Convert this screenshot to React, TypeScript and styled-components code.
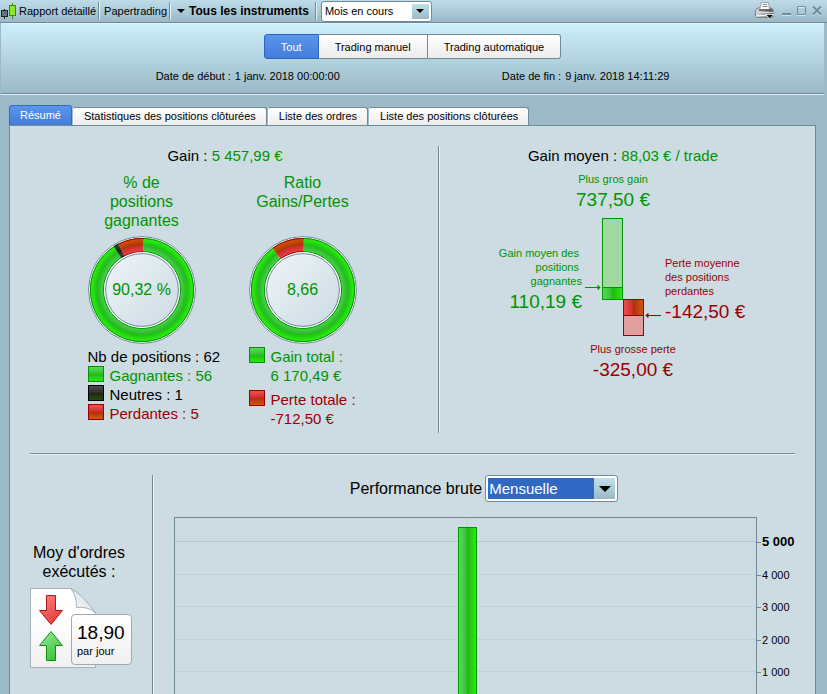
import React from "react";
import styled, { createGlobalStyle, css } from "styled-components";

const color = {
  frame: "#9bb9c7",
  panel: "#cddce3",
  line: "#6f8b98",
  light: "#e4f3fa",
  gain: "#009400",
  loss: "#990000",
};

type Tone = "gain" | "loss" | "neutral";

const toneText: Record<Tone, string> = {
  gain: color.gain,
  loss: color.loss,
  neutral: "#000",
};

const toneFill: Record<Tone, string> = {
  gain: "#52e052, #34bc34 50%, #1cbc10 50%, #2ce812",
  loss: "#f45050, #cc2a2a 50%, #b03008 50%, #d05a10",
  neutral: "#4a4a4a, #2c2c2c 50%, #1a2808 50%, #284a12",
};

const GlobalStyle = createGlobalStyle`
  *, *::before, *::after { box-sizing: border-box; }
  body {
    margin: 0;
    background: ${color.frame};
    color: #000;
    font: 11px/14px "Liberation Sans", Arial, sans-serif;
  }
  button, select { font: inherit; color: inherit; margin: 0; }
  h2, p, dl, dd, dt, ul { margin: 0; padding: 0; font: inherit; }
`;

const Shell = styled.div`
  min-height: 100vh;
  display: flex;
  flex-direction: column;
  background: ${color.frame};
`;

/* Title bar */

const TitleBar = styled.header`
  display: flex;
  align-items: center;
  height: 23px;
  padding: 0 5px 0 1px;
  background: linear-gradient(#bddce8, #9bb8c6);
  border-bottom: 1px solid ${color.line};
`;

const TitleItem = styled.span`
  display: flex;
  align-items: center;
  gap: 2px;
  white-space: nowrap;
`;

const Separator = styled.span`
  width: 2px;
  height: 18px;
  margin: 0 4px 0 2px;
  border-left: 1px solid ${color.line};
  border-right: 1px solid ${color.light};
`;

const MenuButton = styled.button`
  display: flex;
  align-items: center;
  gap: 4px;
  padding: 0 4px 0 2px;
  border: 0;
  background: none;
  font-size: 12px;
  font-weight: bold;
  white-space: nowrap;
`;

const WindowTools = styled.div`
  display: flex;
  align-items: center;
  gap: 5px;
  margin-left: auto;
`;

const ToolButton = styled.button<{ $wide?: boolean }>`
  display: flex;
  padding: 0;
  margin-right: ${(p) => (p.$wide ? "3px" : "0")};
  border: 0;
  background: none;
`;

/* Drop-down */

const SelectFrame = styled.span<{ $large?: boolean }>`
  display: grid;
  grid-template-columns: 1fr ${(p) => (p.$large ? "21px" : "17px")};
  width: ${(p) => (p.$large ? "133px" : "111px")};
  height: ${(p) => (p.$large ? "27px" : "21px")};
  padding: 2px;
  border: 1px solid ${color.line};
  border-radius: 3px;
  background: #fff;
`;

const SelectBox = styled.select<{ $large?: boolean }>`
  grid-area: 1 / 1 / 2 / 3;
  appearance: none;
  width: 100%;
  padding: 0 0 0 1px;
  border: 0;
  border-radius: 0;
  background: #fff;
  ${(p) =>
    p.$large &&
    css`
      font-size: 15px;
      color: #fff;
      background: #2f69c4;
    `}
`;

const SelectArrow = styled.span`
  grid-area: 1 / 2;
  z-index: 1;
  display: flex;
  align-items: center;
  justify-content: center;
  pointer-events: none;
  background: linear-gradient(#c0e0ec, #9bb9c7);
`;

/* Filter header */

const FilterHeader = styled.section`
  display: flex;
  flex-direction: column;
  align-items: center;
  gap: 10px;
  height: 71px;
  margin: 0 3px 0 1px;
  padding-top: 10px;
  background: linear-gradient(#cdeefb, #9bb9c7);
  border-top: 1px solid ${color.light};
  border-bottom: 1px solid ${color.line};
  box-shadow: 0 1px ${color.light};
`;

const Segments = styled.div`
  display: flex;
`;

const Segment = styled.button<{ $active?: boolean }>`
  height: 25px;
  padding: 0 16px;
  border: 1px solid ${color.line};
  border-left-width: 0;
  background: linear-gradient(#fff, #ececec);
  white-space: nowrap;
  &:first-child {
    border-left-width: 1px;
    border-radius: 3px 0 0 3px;
  }
  &:last-child {
    border-radius: 0 3px 3px 0;
  }
  ${(p) =>
    p.$active &&
    css`
      color: #fff;
      border-color: #2f62c4;
      background: linear-gradient(#5a96ec, #447cda);
    `}
`;

const Dates = styled.div`
  display: flex;
  justify-content: center;
  gap: 162px;
`;

const DateField = styled.p`
  display: flex;
  gap: 4px;
  white-space: nowrap;
`;

/* Tabs */

const TabList = styled.div`
  display: flex;
  align-items: flex-end;
  gap: 1px;
  margin: 11px 0 0 9px;
`;

const Tab = styled.button<{ $active?: boolean }>`
  height: 18px;
  padding: 0 10px;
  border: 1px solid ${color.line};
  border-bottom: 0;
  border-left-color: #fff;
  border-radius: 3px 3px 0 0;
  background: linear-gradient(#fff, #ececec);
  white-space: nowrap;
  line-height: 15px;
  ${(p) =>
    p.$active &&
    css`
      height: 20px;
      color: #fff;
      border-color: #3468c8;
      background: linear-gradient(#5a96ec, #447cda);
    `}
`;

const Panel = styled.main`
  flex: 1;
  display: flex;
  flex-direction: column;
  margin: 0 11px 0 9px;
  padding: 20px 20px 0;
  border: solid ${color.line};
  border-width: 1px 1px 0;
  background: ${color.panel};
`;

/* Summary */

const Summary = styled.section`
  display: grid;
  grid-template-columns: 8fr 7fr;
  padding-bottom: 20px;
  border-bottom: 1px solid ${color.line};
  box-shadow: 0 1px ${color.light};
`;

const GainColumn = styled.div`
  padding: 0 18px 5px 0;
  text-align: center;
`;

const AverageColumn = styled.div`
  padding-left: 12px;
  border-left: 1px solid ${color.line};
  box-shadow: inset 1px 0 ${color.light};
  text-align: center;
`;

const Headline = styled.h2`
  font-size: 15px;
  line-height: 20px;
`;

const Toned = styled.span<{ $tone: Tone }>`
  color: ${(p) => toneText[p.$tone]};
`;

const Gauges = styled.div`
  display: grid;
  grid-template-columns: 108px 108px;
  justify-content: center;
  gap: 53px;
  margin-top: 7px;
  padding-right: 6px;
`;

const Gauge = styled.div`
  display: flex;
  flex-direction: column;
`;

const GaugeTitle = styled.h2`
  min-height: 57px;
  margin-bottom: 6px;
  color: ${color.gain};
  font-size: 16px;
  line-height: 19px;
`;

const Dial = styled.div`
  display: grid;
  place-items: center;
  margin-bottom: 3px;
  & > * {
    grid-area: 1 / 1;
  }
`;

const DialValue = styled.span`
  color: ${color.gain};
  font-size: 16px;
`;

const Legend = styled.ul`
  list-style: none;
  text-align: left;
  font-size: 15px;
  line-height: 19px;
  white-space: nowrap;
`;

const LegendItem = styled.li<{ $tone: Tone; $spaced?: boolean }>`
  display: flex;
  gap: 6px;
  margin-top: ${(p) => (p.$spaced ? "5px" : "0")};
  color: ${(p) => toneText[p.$tone]};
`;

const Swatch = styled.span<{ $tone: Tone }>`
  flex: none;
  width: 16px;
  height: 16px;
  border: 1px solid ${(p) => toneText[p.$tone]};
  background: linear-gradient(${(p) => toneFill[p.$tone]});
`;

const Extreme = styled.dl<{ $tone: Tone }>`
  margin: 6px 0;
  padding: ${(p) => (p.$tone === "gain" ? "0 20px 0 0" : "0 0 0 20px")};
  color: ${(p) => toneText[p.$tone]};
`;

const Amount = styled.dd`
  font-size: 19px;
  line-height: 24px;
  margin-top: 2px;
`;

const Comparison = styled.div`
  display: grid;
  grid-template-columns: 1fr 76px 1fr;
`;

const Average = styled.dl<{ $tone: Tone }>`
  padding: ${(p) => (p.$tone === "gain" ? "28px 3px 0 0" : "38px 0 0 4px")};
  text-align: ${(p) => (p.$tone === "gain" ? "right" : "left")};
  color: ${(p) => toneText[p.$tone]};
  white-space: nowrap;
`;

/* Performance */

const Lower = styled.section`
  flex: 1;
  display: grid;
  grid-template-columns: 122px 1fr;
  padding-top: 21px;
`;

const Orders = styled.div`
  padding: 68px 20px 0 0;
`;

const OrdersTitle = styled.h2`
  margin-bottom: 7px;
  padding-right: 4px;
  text-align: center;
  font-size: 16px;
  line-height: 19px;
`;

const OrdersCard = styled.div`
  display: grid;
  justify-items: start;
  align-items: start;
  & > * {
    grid-area: 1 / 1;
  }
`;

const RateCard = styled.p`
  width: 61px;
  height: 51px;
  margin: 26px 0 0 41px;
  padding: 7px 0 0 5px;
  border: 1px solid #9dabb5;
  border-radius: 4px;
  background: linear-gradient(#fff, #f0f0f0);
  z-index: 1;
`;

const RateValue = styled.strong`
  display: block;
  font-size: 19px;
  font-weight: normal;
  line-height: 22px;
`;

const Performance = styled.div`
  display: flex;
  flex-direction: column;
  padding-left: 20px;
  border-left: 1px solid ${color.line};
  box-shadow: inset 1px 0 ${color.light};
`;

const PerformanceTitle = styled.label`
  display: flex;
  align-items: center;
  justify-content: center;
  gap: 3px;
  margin-bottom: 15px;
  font-size: 16px;
`;

const Chart = styled.div`
  flex: 1;
  display: grid;
  grid-template-columns: 1fr 38px;
  grid-template-rows: 25px 33px 32px 33px 32px minmax(22px, 1fr);
  margin-left: 1px;
`;

const Plot = styled.div`
  grid-area: 1 / 1 / -1 / 2;
  border: solid ${color.line};
  border-width: 1px 1px 0;
`;

const GridLine = styled.div<{ $row: number; $major: boolean }>`
  grid-area: ${(p) => p.$row} / 1;
  margin: 0 1px;
  border-bottom: 1px solid ${(p) => (p.$major ? "#bac4c9" : "#c1d0d7")};
`;

const MonthLine = styled.div`
  grid-area: 1 / 1 / 2 / 2;
  justify-self: center;
  width: 1px;
  margin: 1px 0 0 4px;
  background: #c1d0d7;
`;

const MonthBar = styled.div`
  grid-area: 1 / 1 / -1 / 2;
  justify-self: center;
  width: 19px;
  margin: 10px 0 0 4px;
  border: solid ${color.gain};
  border-width: 1px 1px 0;
  background: linear-gradient(90deg, ${toneFill.gain});
`;

const AxisLabel = styled.span<{ $row: number; $major: boolean }>`
  grid-area: ${(p) => p.$row} / 2;
  align-self: end;
  display: flex;
  align-items: center;
  gap: 1px;
  margin-bottom: -7px;
  white-space: nowrap;
  font-size: ${(p) => (p.$major ? "13px" : "11px")};
  font-weight: ${(p) => (p.$major ? "bold" : "normal")};
  &::before {
    content: "";
    width: 4px;
    height: 1px;
    background: ${color.line};
  }
`;

const Caret = ({ size = 7 }: { size?: number }) => (
  <svg width={size} height={Math.ceil(size / 2)} viewBox="0 0 8 4" preserveAspectRatio="none" aria-hidden="true">
    <path d="M0 0H8L4 4Z" fill="#000" />
  </svg>
);

const CandleIcon = () => (
  <svg width="16" height="20" viewBox="0 0 16 20" aria-hidden="true">
    <path d="M3.5 8V18" stroke="#222" />
    <rect x="0.5" y="9.5" width="6" height="6" fill="#66757d" stroke="#222" />
    <path d="M11.5 2V18" stroke="#3b8a00" />
    <rect x="8.5" y="4.5" width="6" height="10" fill="#8fe622" stroke="#3b8a00" />
  </svg>
);

const PrinterIcon = () => (
  <svg width="19" height="18" viewBox="0 0 19 18" aria-hidden="true">
    <defs>
      <linearGradient id="printer" x1="0" y1="0" x2="1" y2="0">
        <stop offset="0" stopColor="#dedede" />
        <stop offset="0.6" stopColor="#a0a0a0" />
        <stop offset="1" stopColor="#505050" />
      </linearGradient>
    </defs>
    <path d="M1 7.5L4 5.5H15L18 7.5V14.5Q18 15.5 17 15.5H1.5Q0.5 15.5 0.5 14.5V8.5Z" fill="url(#printer)" stroke="#808080" />
    <path d="M6.5 0.5H13.5L14.5 7.5H4.5Z" fill="#fff" stroke="#a4a4a4" />
    <path d="M8 2.5H12M7.5 4.5H12.5" stroke="#888" />
    <path d="M4 8H15.5" stroke="#333" />
    <path d="M1 10.5H18" stroke="#d8d8d8" />
    <path d="M1.5 13.5H11" stroke="#f4f4f4" />
    <path d="M10.8 12.5H18.6L14.7 17Z" fill="#000" stroke="#fff" strokeWidth="0.8" />
  </svg>
);

const WindowIcon = ({ d, weight = 1 }: { d: string; weight?: number }) => (
  <svg width="10" height="12" viewBox="0 0 10 12" fill="none" aria-hidden="true">
    <path d={d} stroke={color.light} strokeWidth={weight} transform="translate(0 1)" opacity="0.7" />
    <path d={d} stroke="#718c99" strokeWidth={weight} />
  </svg>
);

type Slice = { tone: Tone; from: number; to: number };

const point = (deg: number, r: number) => {
  const a = (deg * Math.PI) / 180;
  return `${54 + r * Math.sin(a)} ${54 - r * Math.cos(a)}`;
};

const slicePath = ({ from, to }: Slice) => {
  const large = to - from > 180 ? 1 : 0;
  return `M${point(from, 52)}A52 52 0 ${large} 1 ${point(to, 52)}L${point(to, 38)}A38 38 0 ${large} 0 ${point(from, 38)}Z`;
};

const ringStops: Record<Tone, string[]> = {
  gain: ["#48d848", "#2cb82c", "#1cc410", "#2cea12"],
  loss: ["#ec4444", "#cc2c2c", "#b23408", "#c85008"],
  neutral: ["#444", "#2a2a2a", "#1a2808", "#284a12"],
};

const Ring = ({ id, slices }: { id: string; slices: Slice[] }) => (
  <svg width="108" height="108" viewBox="0 0 108 108" aria-hidden="true">
    <defs>
      <linearGradient id={`${id}-disc`} x1="0" y1="0" x2="1" y2="1">
        <stop offset="0.1" stopColor="#ebf2f6" />
        <stop offset="0.9" stopColor="#cfdde4" />
      </linearGradient>
      {(Object.keys(ringStops) as Tone[]).map((tone) => (
        <radialGradient key={tone} id={`${id}-${tone}`} gradientUnits="userSpaceOnUse" cx="54" cy="54" r="52">
          <stop offset="0.73" stopColor={ringStops[tone][0]} />
          <stop offset="0.85" stopColor={ringStops[tone][1]} />
          <stop offset="0.87" stopColor={ringStops[tone][2]} />
          <stop offset="0.97" stopColor={ringStops[tone][3]} />
        </radialGradient>
      ))}
    </defs>
    <circle cx="54" cy="54" r="53.4" fill="#fff" stroke="#71869a" strokeWidth="1" />
    {slices.map((s) => (
      <path key={s.tone} d={slicePath(s)} fill={`url(#${id}-${s.tone})`} />
    ))}
    {slices.map((s) => (
      <g key={s.tone} fill="none" stroke={toneText[s.tone]}>
        <path d={`M${point(s.from, 51.6)}A51.6 51.6 0 ${s.to - s.from > 180 ? 1 : 0} 1 ${point(s.to, 51.6)}`} />
        <path d={`M${point(s.from, 38.4)}A38.4 38.4 0 ${s.to - s.from > 180 ? 1 : 0} 1 ${point(s.to, 38.4)}`} />
      </g>
    ))}
    <circle cx="54" cy="54" r="38" fill="#fff" />
    <circle cx="54" cy="54" r="36.4" fill={`url(#${id}-disc)`} stroke="#71869a" />
  </svg>
);

const RangeBars = () => (
  <svg width="76" height="118" viewBox="0 0 76 118" aria-hidden="true">
    <defs>
      <linearGradient id="bar-gain">
        <stop offset="0" stopColor="#52e052" />
        <stop offset="0.5" stopColor="#34bc34" />
        <stop offset="0.5" stopColor="#1cbc10" />
        <stop offset="1" stopColor="#2ce812" />
      </linearGradient>
      <linearGradient id="bar-loss">
        <stop offset="0" stopColor="#f45050" />
        <stop offset="0.5" stopColor="#cc2a2a" />
        <stop offset="0.5" stopColor="#b03008" />
        <stop offset="1" stopColor="#d05a10" />
      </linearGradient>
    </defs>
    <g stroke={color.gain}>
      <rect x="17.5" y="0.5" width="20" height="81" fill="#a0d9a0" />
      <rect x="17.5" y="69.5" width="20" height="12" fill="url(#bar-gain)" />
      <path d="M0 69.5H15" />
      <path d="M13 67.5L15 69.5L13 71.5Z" fill={color.gain} />
    </g>
    <g stroke={color.loss}>
      <rect x="38.5" y="81.5" width="20" height="36" fill="#e09e9e" />
      <rect x="38.5" y="81.5" width="20" height="16" fill="url(#bar-loss)" />
      <path d="M61 97.5H76" />
      <path d="M63 95.5L61 97.5L63 99.5Z" fill={color.loss} />
    </g>
  </svg>
);

const OrdersIcon = () => (
  <svg width="66" height="80" viewBox="0 0 66 80" aria-hidden="true">
    <defs>
      <linearGradient id="sheet" x1="0" y1="0" x2="0" y2="1">
        <stop offset="0.4" stopColor="#fff" />
        <stop offset="1" stopColor="#f0f0f0" />
      </linearGradient>
      <linearGradient id="fold" x1="0" y1="1" x2="0.7" y2="0.3">
        <stop offset="0" stopColor="#fff" />
        <stop offset="1" stopColor="#dde2e5" />
      </linearGradient>
      <linearGradient id="down" x1="0" y1="0" x2="0.6" y2="1">
        <stop offset="0" stopColor="#ff8585" />
        <stop offset="1" stopColor="#e83c3c" />
      </linearGradient>
      <linearGradient id="up" x1="0" y1="0" x2="0.6" y2="1">
        <stop offset="0" stopColor="#98ec98" />
        <stop offset="1" stopColor="#3cc43c" />
      </linearGradient>
    </defs>
    <path d="M0.5 0.5H41Q52 7 65.5 25V79.5H0.5Z" fill="url(#sheet)" stroke="#a6b2bb" />
    <path d="M41 0.5Q47 9 46.5 19.5Q58 18 65.5 25Q54 8 41 0.5Z" fill="url(#fold)" stroke="#a6b2bb" />
    <path d="M16.5 7.5H25.5V22.5H32.5L21 36.5L9.5 22.5H16.5Z" fill="url(#down)" stroke="#b01818" />
    <path d="M21 43.5L32.5 57.5H25.5V72.5H16.5V57.5H9.5Z" fill="url(#up)" stroke="#12900f" />
  </svg>
);

const ticks = ["5 000", "4 000", "3 000", "2 000", "1 000"];

export default function App() {
  return (
    <Shell>
      <GlobalStyle />
      <TitleBar>
        <TitleItem>
          <CandleIcon />
          Rapport détaillé
        </TitleItem>
        <Separator />
        <TitleItem>Papertrading</TitleItem>
        <Separator />
        <MenuButton type="button">
          <Caret size={8} />
          Tous les instruments
        </MenuButton>
        <Separator />
        <SelectFrame>
          <SelectBox aria-label="Période" defaultValue="month">
            <option value="month">Mois en cours</option>
          </SelectBox>
          <SelectArrow>
            <Caret size={8} />
          </SelectArrow>
        </SelectFrame>
        <WindowTools>
          <ToolButton type="button" aria-label="Imprimer" $wide>
            <PrinterIcon />
          </ToolButton>
          <ToolButton type="button" aria-label="Réduire">
            <WindowIcon d="M0 9H9" weight={2} />
          </ToolButton>
          <ToolButton type="button" aria-label="Agrandir">
            <WindowIcon d="M0.5 1.5H8.5V9.5H0.5Z" />
          </ToolButton>
          <ToolButton type="button" aria-label="Fermer">
            <WindowIcon d="M1 1.5L9 9.5M9 1.5L1 9.5" weight={2} />
          </ToolButton>
        </WindowTools>
      </TitleBar>

      <FilterHeader>
        <Segments>
          <Segment type="button" $active aria-pressed="true">
            Tout
          </Segment>
          <Segment type="button">Trading manuel</Segment>
          <Segment type="button">Trading automatique</Segment>
        </Segments>
        <Dates>
          <DateField>
            <span>Date de début :</span>
            <span>1 janv. 2018 00:00:00</span>
          </DateField>
          <DateField>
            <span>Date de fin :</span>
            <span>9 janv. 2018 14:11:29</span>
          </DateField>
        </Dates>
      </FilterHeader>

      <TabList role="tablist">
        <Tab type="button" role="tab" aria-selected="true" $active>
          Résumé
        </Tab>
        <Tab type="button" role="tab">Statistiques des positions clôturées</Tab>
        <Tab type="button" role="tab">Liste des ordres</Tab>
        <Tab type="button" role="tab">Liste des positions clôturées</Tab>
      </TabList>

      <Panel>
        <Summary>
          <GainColumn>
            <Headline>
              Gain : <Toned $tone="gain">5 457,99 €</Toned>
            </Headline>
            <Gauges>
              <Gauge>
                <GaugeTitle>
                  % de
                  <br />
                  positions
                  <br />
                  gagnantes
                </GaugeTitle>
                <Dial>
                  <Ring
                    id="positions"
                    slices={[
                      { tone: "gain", from: 2, to: 327 },
                      { tone: "neutral", from: 327, to: 333 },
                      { tone: "loss", from: 333, to: 362 },
                    ]}
                  />
                  <DialValue>90,32 %</DialValue>
                </Dial>
                <Legend>
                  <LegendItem $tone="neutral">Nb de positions : 62</LegendItem>
                  <LegendItem $tone="gain">
                    <Swatch $tone="gain" />
                    Gagnantes : 56
                  </LegendItem>
                  <LegendItem $tone="neutral">
                    <Swatch $tone="neutral" />
                    Neutres : 1
                  </LegendItem>
                  <LegendItem $tone="loss">
                    <Swatch $tone="loss" />
                    Perdantes : 5
                  </LegendItem>
                </Legend>
              </Gauge>
              <Gauge>
                <GaugeTitle>
                  Ratio
                  <br />
                  Gains/Pertes
                </GaugeTitle>
                <Dial>
                  <Ring
                    id="ratio"
                    slices={[
                      { tone: "gain", from: 1, to: 324 },
                      { tone: "loss", from: 324, to: 361 },
                    ]}
                  />
                  <DialValue>8,66</DialValue>
                </Dial>
                <Legend>
                  <LegendItem $tone="gain">
                    <Swatch $tone="gain" />
                    <span>
                      Gain total :
                      <br />
                      6 170,49 €
                    </span>
                  </LegendItem>
                  <LegendItem $tone="loss" $spaced>
                    <Swatch $tone="loss" />
                    <span>
                      Perte totale :
                      <br />
                      -712,50 €
                    </span>
                  </LegendItem>
                </Legend>
              </Gauge>
            </Gauges>
          </GainColumn>

          <AverageColumn>
            <Headline>
              Gain moyen : <Toned $tone="gain">88,03 € / trade</Toned>
            </Headline>
            <Extreme $tone="gain">
              <dt>Plus gros gain</dt>
              <Amount>737,50 €</Amount>
            </Extreme>
            <Comparison>
              <Average $tone="gain">
                <dt>
                  Gain moyen des&nbsp;
                  <br />
                  positions&nbsp;
                  <br />
                  gagnantes
                </dt>
                <Amount>110,19 €</Amount>
              </Average>
              <RangeBars />
              <Average $tone="loss">
                <dt>
                  Perte moyenne
                  <br />
                  des positions
                  <br />
                  perdantes
                </dt>
                <Amount>-142,50 €</Amount>
              </Average>
            </Comparison>
            <Extreme $tone="loss">
              <dt>Plus grosse perte</dt>
              <Amount>-325,00 €</Amount>
            </Extreme>
          </AverageColumn>
        </Summary>

        <Lower>
          <Orders>
            <OrdersTitle>
              Moy d'ordres
              <br />
              exécutés :
            </OrdersTitle>
            <OrdersCard>
              <OrdersIcon />
              <RateCard>
                <RateValue>18,90</RateValue>
                par jour
              </RateCard>
            </OrdersCard>
          </Orders>
          <Performance>
            <PerformanceTitle>
              Performance brute
              <SelectFrame $large>
                <SelectBox $large defaultValue="monthly">
                  <option value="monthly">Mensuelle</option>
                </SelectBox>
                <SelectArrow>
                  <Caret size={12} />
                </SelectArrow>
              </SelectFrame>
            </PerformanceTitle>
            <Chart>
              {ticks.map((tick, i) => (
                <GridLine key={tick} $row={i + 1} $major={i === 0} />
              ))}
              <MonthLine />
              <MonthBar />
              <Plot />
              {ticks.map((tick, i) => (
                <AxisLabel key={tick} $row={i + 1} $major={i === 0}>
                  {tick}
                </AxisLabel>
              ))}
            </Chart>
          </Performance>
        </Lower>
      </Panel>
    </Shell>
  );
}
